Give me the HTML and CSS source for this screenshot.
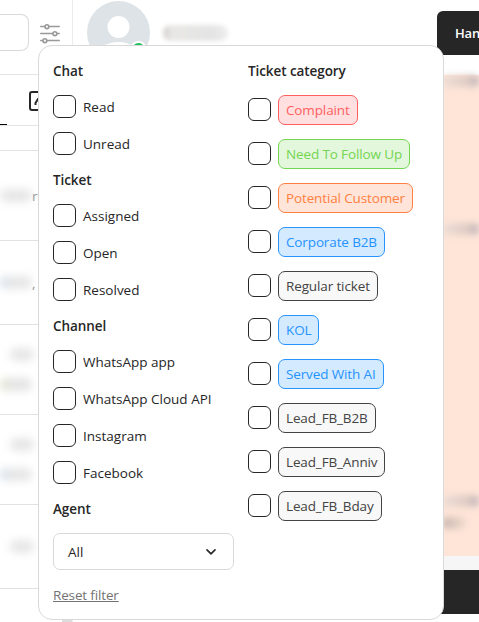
FILE: index.html
```
<!DOCTYPE html>
<html lang="en">
<head>
    <meta charset="UTF-8">
    <meta name="viewport" content="width=device-width, initial-scale=1.0">
    <title>Inbox</title>
    <link rel="stylesheet" href="styles.css">
</head>
<body>
    <div class="app">
        <aside class="sidebar">
            <div class="search-row">
                <div class="search-box"></div>
                <svg class="filter-icon" width="20" height="20" viewBox="0 0 20 20" fill="none" stroke="#999" stroke-width="1.6" stroke-linecap="round">
                    <path d="M.8 2.500H19.200M.8 9.500H19.200M.8 16.500H19.200"/>
                    <g fill="#fff">
                        <circle cx="6.900" cy="2.700" r="1.900"/>
                        <circle cx="14.900" cy="9.700" r="1.900"/>
                        <circle cx="4.900" cy="16.700" r="1.900"/>
                    </g>
                </svg>
            </div>
            <div class="tabs">
                <span class="tab-active"></span>
                <svg class="tab-icon" width="20" height="20" viewBox="0 0 20 20" fill="none" stroke="#262626" stroke-width="2">
                    <rect x="1" y="1" width="18" height="18" rx="2"/>
                    <path d="M6.500 14V12L9 8H14"/>
                </svg>
            </div>
            <div class="row row-first"></div>
            <div class="row row-tall"><span class="smudge wide"></span><span class="peek">ri</span></div>
            <div class="row"><span class="smudge wide blue"></span><span class="peek">,</span></div>
            <div class="row row-tall two"><span class="smudge"></span><span class="smudge wide olive"></span></div>
            <div class="row row-tall two"><span class="smudge"></span><span class="smudge wide blue"></span></div>
            <div class="row"><span class="smudge"></span></div>
            <div class="scroll-end"></div>
        </aside>

        <main class="chat">
            <header class="chat-header">
                <div class="avatar">
                    <svg width="63" height="63" viewBox="0 0 63 63">
                        <circle cx="31.500" cy="31.500" r="31.500" fill="#dde3e6"/>
                        <circle cx="31.500" cy="26" r="11" fill="#fff"/>
                        <ellipse cx="31.500" cy="55" rx="21" ry="14" fill="#fff"/>
                    </svg>
                    <span class="online"></span>
                </div>
                <span class="contact-name"></span>
                <button class="handle-btn">Han</button>
            </header>
            <div class="messages">
                <div class="bubble">
                    <span class="shade shade-top"></span>
                    <span class="shade shade-mid"></span>
                    <span class="shade shade-low"></span>
                    <span class="shade shade-end"></span>
                </div>
            </div>
            <div class="composer"></div>
            <div class="chat-footer"></div>
        </main>
    </div>

    <div class="filter-popup">
        <div class="col-left">
            <h4>Chat</h4>
            <div class="options">
                <label><input type="checkbox"><span>Read</span></label>
                <label><input type="checkbox"><span>Unread</span></label>
            </div>
            <h4>Ticket</h4>
            <div class="options">
                <label><input type="checkbox"><span>Assigned</span></label>
                <label><input type="checkbox"><span>Open</span></label>
                <label><input type="checkbox"><span>Resolved</span></label>
            </div>
            <h4>Channel</h4>
            <div class="options">
                <label><input type="checkbox"><span>WhatsApp app</span></label>
                <label><input type="checkbox"><span>WhatsApp Cloud API</span></label>
                <label><input type="checkbox"><span>Instagram</span></label>
                <label><input type="checkbox"><span>Facebook</span></label>
            </div>
            <h4>Agent</h4>
            <div class="select">
                <span>All</span>
                <svg width="10" height="6" viewBox="0 0 10 6" fill="none" stroke="#262626" stroke-width="1.6" stroke-linecap="round" stroke-linejoin="round">
                    <path d="M1 .9L5 4.900L9 .9"/>
                </svg>
            </div>
            <a class="reset" href="#">Reset filter</a>
        </div>

        <div class="col-right">
            <h4>Ticket category</h4>
            <div class="categories">
                <label><input type="checkbox"><span class="tag red">Complaint</span></label>
                <label><input type="checkbox"><span class="tag green">Need To Follow Up</span></label>
                <label><input type="checkbox"><span class="tag orange">Potential Customer</span></label>
                <label><input type="checkbox"><span class="tag blue">Corporate B2B</span></label>
                <label><input type="checkbox"><span class="tag">Regular ticket</span></label>
                <label><input type="checkbox"><span class="tag blue">KOL</span></label>
                <label><input type="checkbox"><span class="tag blue">Served With AI</span></label>
                <label><input type="checkbox"><span class="tag">Lead_FB_B2B</span></label>
                <label><input type="checkbox"><span class="tag">Lead_FB_Anniv</span></label>
                <label><input type="checkbox"><span class="tag">Lead_FB_Bday</span></label>
            </div>
        </div>
    </div>
</body>
</html>
```
FILE: styles.css
```
* {
    box-sizing: border-box;
}

body {
    margin: 0;
    height: 622px;
    overflow: hidden;
    position: relative;
    background-color: #fff;
    color: #262626;
    font-family: "Open Sans", sans-serif;
    font-size: 13.5px;
}

.app {
    display: flex;
    height: 622px;
    overflow: hidden;
}

/* conversation list */
.sidebar {
    width: 73px;
    flex-shrink: 0;
    border-right: 1px solid #ececec;
    overflow: hidden;
}

.search-row {
    display: flex;
    align-items: center;
    gap: 11px;
    height: 75px;
    padding-bottom: 9px;
    border-bottom: 1px solid #e4e4e4;
}

.search-box {
    width: 29px;
    height: 37px;
    border: 1px solid #d9d9d9;
    border-left: none;
    border-radius: 0 8px 8px 0;
}

.filter-icon {
    flex-shrink: 0;
    margin-top: 2px;
}

.tabs {
    display: flex;
    gap: 22px;
    height: 51px;
    border-bottom: 1px solid #e4e4e4;
}

.tab-active {
    width: 7px;
    border-bottom: 1px solid #000;
}

.tab-icon {
    flex-shrink: 0;
    margin-top: 16px;
}

.row {
    display: flex;
    align-items: center;
    height: 84px;
    border-bottom: 1px solid #e2e2e2;
}

.row-first {
    height: 25px;
}

.row-tall {
    height: 90px;
}

.row.two {
    flex-direction: column;
    align-items: flex-start;
    justify-content: center;
    gap: 17px;
}

.smudge {
    flex-shrink: 0;
    width: 24px;
    height: 13px;
    margin-left: 10px;
    border-radius: 6px;
    background-color: #e6e6e6;
    filter: blur(4px);
}

.smudge.wide {
    width: 32px;
    margin-left: 0;
}

.smudge.blue {
    background: linear-gradient(90deg, #cfdff0, #e6e6e6 30%);
}

.smudge.olive {
    background: linear-gradient(90deg, #e4e6c8, #e4e4e4 30%);
}

.peek {
    color: #888;
}

.scroll-end {
    width: 11px;
    height: 3px;
    margin: 30px 0 0 62px;
    background-color: #dcdcdc;
}

/* conversation */
.chat {
    flex: 1;
    min-width: 0;
    display: flex;
    flex-direction: column;
}

.chat-header {
    display: flex;
    height: 75px;
    padding-left: 14px;
}

.avatar {
    position: relative;
    width: 63px;
    height: 63px;
    margin-top: 1px;
}

.online {
    position: absolute;
    left: 43px;
    top: 40px;
    width: 17px;
    height: 17px;
    border: 2px solid #fff;
    border-radius: 50%;
    background-color: #1fc15b;
}

.contact-name {
    width: 65px;
    height: 16px;
    margin: 25px 0 0 13px;
    border-radius: 8px;
    background: linear-gradient(90deg, #d2d0cd, #e9e8e7 15%, #e4e4e4 75%, #eee);
    filter: blur(2px);
}

.handle-btn {
    width: 42px;
    height: 44px;
    margin: 11px 0 0 auto;
    padding: 0 0 0 18px;
    border: none;
    border-radius: 6px 0 0 0;
    background-color: #262626;
    color: #fff;
    font: 600 13px "Open Sans", sans-serif;
    letter-spacing: -0.2px;
    text-align: left;
    white-space: nowrap;
}

.messages {
    display: flex;
    justify-content: flex-end;
    height: 481px;
}

.bubble {
    position: relative;
    width: 45px;
    background-color: #fee5d8;
}

.shade {
    position: absolute;
    left: 8px;
    width: 37px;
    height: 12px;
    border-radius: 6px;
    background: linear-gradient(90deg, #efdfd7, #dfcbc3 70%, #b9b0bb);
    filter: blur(3px);
}

.shade-top {
    top: 0;
}

.shade-mid {
    top: 148px;
}

.shade-low {
    top: 420px;
}

.shade-end {
    top: 442px;
    width: 24px;
    background: linear-gradient(90deg, #c6b5ae, #f2dbcf);
}

.composer {
    height: 14px;
    background-color: #f6f6f6;
}

.chat-footer {
    height: 44px;
    background-color: #262626;
}

/* filter menu */
.filter-popup {
    position: absolute;
    left: 38px;
    top: 45px;
    display: flex;
    gap: 14px;
    width: 406px;
    height: 575px;
    padding: 14px;
    border: 1px solid #d9d9d9;
    border-radius: 14px;
    background-color: #fff;
}

.col-left {
    width: 181px;
}

h4 {
    margin: 0 0 13px;
    font-size: 13.5px;
    font-weight: 600;
    letter-spacing: -0.08px;
    line-height: 22px;
}

.options {
    display: flex;
    flex-direction: column;
    gap: 14px;
    margin-bottom: 14px;
}

label {
    display: flex;
    align-items: center;
    gap: 7px;
    height: 23px;
    white-space: nowrap;
}

input[type="checkbox"] {
    appearance: none;
    flex-shrink: 0;
    width: 23px;
    height: 23px;
    margin: 0;
    border: 1px solid #262626;
    border-radius: 6px;
    background-color: #fff;
}

.select {
    display: flex;
    align-items: center;
    justify-content: space-between;
    height: 37px;
    margin-bottom: 14px;
    padding: 0 17px 0 14px;
    border: 1px solid #d9d9d9;
    border-radius: 7px;
}

.reset {
    display: block;
    color: #737373;
    letter-spacing: -0.15px;
    line-height: 22px;
}

.categories {
    display: flex;
    flex-direction: column;
    gap: 14px;
}

.categories label {
    height: 30px;
}

.categories input[type="checkbox"] {
    margin-bottom: 1px;
}

.tag {
    height: 30px;
    padding: 0 7px;
    border: 1px solid #434343;
    border-radius: 7px;
    background-color: #f8f8f8;
    color: #434343;
    letter-spacing: -0.13px;
    line-height: 29px;
}

.tag.red {
    border-color: #ff5f5f;
    background-color: #ffdfdf;
    color: #ff5f5f;
}

.tag.green {
    border-color: #73d551;
    background-color: #e3f7dc;
    color: #73d551;
}

.tag.orange {
    border-color: #ff8040;
    background-color: #ffe5d9;
    color: #ff8040;
}

.tag.blue {
    border-color: #2693ff;
    background-color: #d4eaff;
    color: #2693ff;
}
```
